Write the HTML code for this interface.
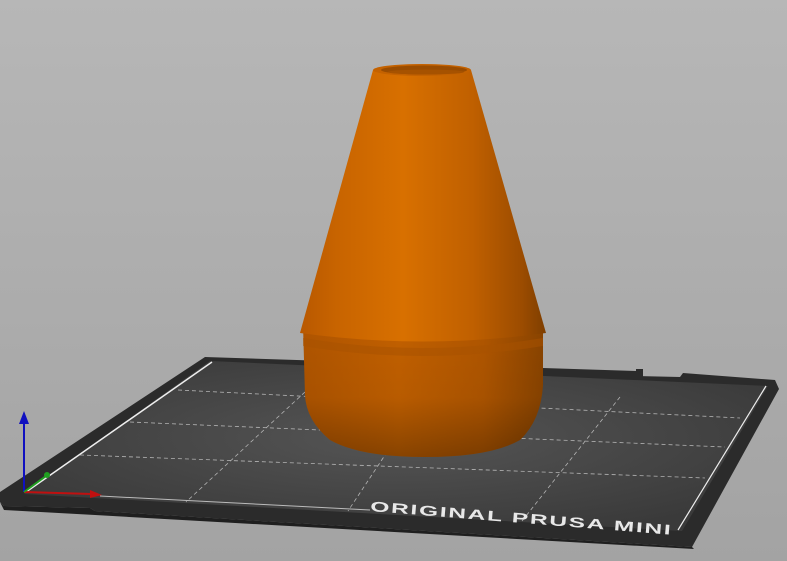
<!DOCTYPE html>
<html><head><meta charset="utf-8"><style>
html,body{margin:0;padding:0;width:787px;height:561px;overflow:hidden}
svg{display:block}
</style></head><body>
<svg width="787" height="561" viewBox="0 0 787 561" xmlns="http://www.w3.org/2000/svg">
<defs>
<linearGradient id="bg" x1="0" y1="0" x2="0" y2="1">
<stop offset="0" stop-color="#b7b7b7"/><stop offset="1" stop-color="#a3a3a3"/>
</linearGradient>
<radialGradient id="bed" cx="0.5" cy="0.45" r="0.6">
<stop offset="0" stop-color="#555"/><stop offset="1" stop-color="#3a3a3a"/>
</radialGradient>
<linearGradient id="cone" x1="0" y1="0" x2="1" y2="0">
<stop offset="0" stop-color="#b85800"/><stop offset="0.15" stop-color="#c86400"/>
<stop offset="0.42" stop-color="#d87000"/><stop offset="0.7" stop-color="#c06000"/>
<stop offset="0.9" stop-color="#9c4c00"/><stop offset="1" stop-color="#7e3e00"/>
</linearGradient>
<linearGradient id="low" x1="0" y1="0" x2="1" y2="0">
<stop offset="0" stop-color="#b05500"/><stop offset="0.4" stop-color="#c26000"/>
<stop offset="0.75" stop-color="#b05600"/><stop offset="1" stop-color="#8a4400"/>
</linearGradient>
<linearGradient id="lowv" x1="0" y1="0" x2="0" y2="1">
<stop offset="0" stop-color="#000" stop-opacity="0"/><stop offset="0.55" stop-color="#000" stop-opacity="0.05"/>
<stop offset="1" stop-color="#000" stop-opacity="0.3"/>
</linearGradient>
</defs>
<rect width="787" height="561" fill="url(#bg)"/>
<path d="M205,357 L636,371 L636,376 L680,377 L683,373 L775,380 L779,389 L692,547 L95,511 L90,508 L4,506 L0,502 L0,492 Z" fill="#2b2b2b"/>
<path d="M0,502 L4,506 L90,508 L95,511 L692,547 L694,549 L95,515 L4,510 Z" fill="#1f1f1f"/>
<rect x="636" y="369" width="7" height="8" fill="#2b2b2b"/>
<path d="M210,361 L768,386 L682,531 L24,494 Z" fill="url(#bed)"/>
<path d="M212,362 L26,492" stroke="#eee" stroke-width="1.5" fill="none"/>
<path d="M766,386 L678,530" stroke="#eee" stroke-width="1.2" fill="none"/>
<path d="M100,496 L370,510" stroke="#bbb" stroke-width="1" fill="none"/>
<g stroke="#cfcfcf" stroke-width="0.8" stroke-dasharray="4,3" fill="none" opacity="0.8">
<path d="M178,390 L740,418"/>
<path d="M130,422 L725,447"/>
<path d="M80,455 L705,478"/>
<path d="M305,392 L186,502"/>
<path d="M395,440 L348,511"/>
<path d="M620,397 L522,521"/>
</g>
<text x="0" y="0" transform="translate(370,511) rotate(4.5)" font-family="Liberation Sans, sans-serif" font-weight="bold" font-size="14" fill="#e8e8e8" letter-spacing="1" textLength="303" lengthAdjust="spacingAndGlyphs">ORIGINAL PRUSA MINI</text>
<path d="M24,492 L24,420" stroke="#1010c0" stroke-width="2"/>
<path d="M19,424 L24,411 L29,424 Z" fill="#1010c0"/>
<path d="M24,492 L92,494" stroke="#c01010" stroke-width="2"/>
<path d="M90,490 L102,495 L90,498 Z" fill="#c01010"/>
<path d="M24,492 L46,476" stroke="#20a020" stroke-width="2"/>
<circle cx="47" cy="475" r="3" fill="#20a020"/>
<path d="M303,325 L543,325 L543,385 Q541,420 520,440 Q490,457 425,457 Q360,457 330,440 Q306,420 305,395 Z" fill="url(#low)"/>
<path d="M303,325 L543,325 L543,385 Q541,420 520,440 Q490,457 425,457 Q360,457 330,440 Q306,420 305,395 Z" fill="url(#lowv)"/>
<path d="M303,338 Q423,358 543,338 L543,346 Q423,366 303,346 Z" fill="#a85200" opacity="0.5"/>
<path d="M373,70 Q421,63 471,70 L546,333 Q423,350 300,333 Z" fill="url(#cone)"/>
<ellipse cx="422" cy="70" rx="49" ry="6" fill="#c46200"/>
<ellipse cx="424" cy="70" rx="43" ry="4.5" fill="#9a4c00"/>
<ellipse cx="426" cy="72" rx="38" ry="2.5" fill="#a65200"/>
</svg>
</body></html>
